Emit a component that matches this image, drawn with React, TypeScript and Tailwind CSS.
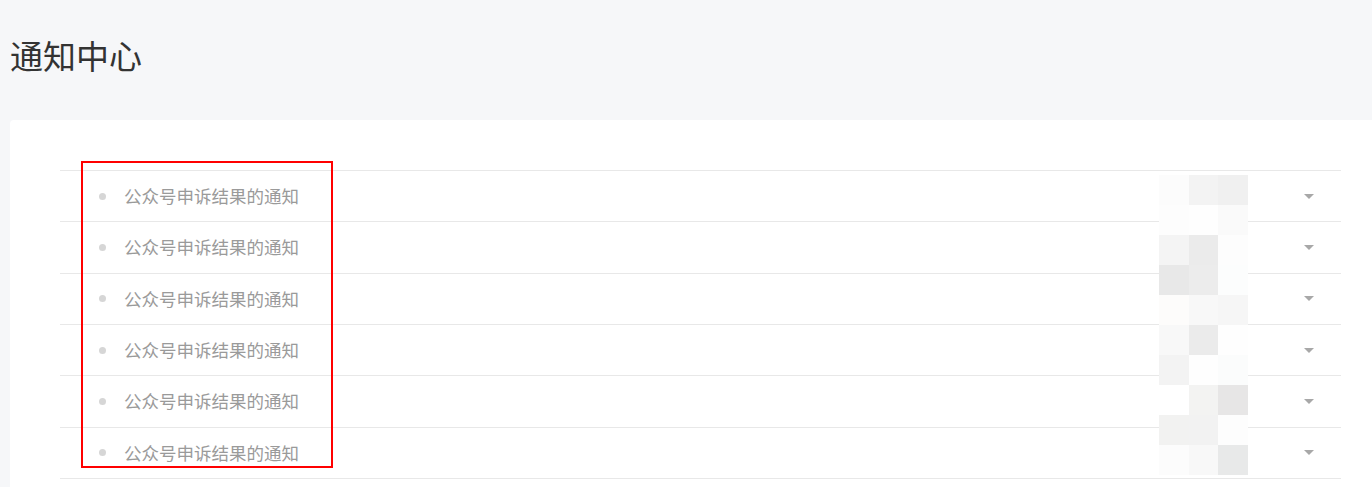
import React from "react";

// mosaic cells, row by row (3 per row)
const MOSAIC: string[] = [
  "#fcfcfc", "#f3f3f3", "#f0f0f0",
  "#fdfdfd", "#fefefe", "#fafafa",
  "#f4f4f4", "#ebebeb", "#fdfdfd",
  "#e8e8e8", "#ececec", "#fcfdfd",
  "#fdfcfb", "#f8f8f8", "#f6f6f6",
  "#f8f8f8", "#ebebeb", "#fefefe",
  "#f3f3f3", "#fefefe", "#fbfcfc",
  "#ffffff", "#f3f3f2", "#e7e6e6",
  "#f2f2f1", "#f2f2f2", "#fdfdfd",
  "#fcfcfc", "#f8f8f8", "#e8e9e9",
];

const ITEMS = Array.from({ length: 6 }, () => "公众号申诉结果的通知");

function NoticeRow({ title }: { title: string }) {
  return (
    <div className="flex h-[51.33px] items-center border-b border-[#e8e8e8]">
      <span className="ml-[39px] h-[7px] w-[7px] rounded-full bg-[#d6d6d6]" />
      <span className="ml-[18px] text-[17.5px] text-[#9a9a9a]">{title}</span>
      <span className="ml-auto mr-[27px] h-0 w-0 border-x-[5px] border-t-[5px] border-x-transparent border-t-[#a8a8a8]" />
    </div>
  );
}

export default function App() {
  return (
    <div
      className="relative h-[487px] w-full overflow-hidden bg-[#f6f7f9]"
      style={{ fontFamily: '"Noto Sans CJK SC", "Noto Sans", sans-serif' }}
    >
      <h1 className="pl-[10px] pt-[32px] text-[33px] leading-[46px] font-normal text-[#333]">
        通知中心
      </h1>

      <div className="ml-[10px] mt-[42px] w-[1381px] rounded-[4px] bg-white px-[50px] pt-[50px] pb-[20px]">
        <div className="relative border-t border-[#e8e8e8]">
          {ITEMS.map((t, i) => (
            <NoticeRow key={i} title={t} />
          ))}

          {/* blurred block */}
          <div className="absolute left-[1099px] top-[4px] grid h-[300px] w-[89px] grid-cols-3 grid-rows-10">
            {MOSAIC.map((c, i) => (
              <div key={i} style={{ backgroundColor: c }} />
            ))}
          </div>
        </div>
      </div>

      {/* annotation box */}
      <div className="absolute left-[81px] top-[161px] h-[307px] w-[252px] border-2 border-[#ff0000]" />
    </div>
  );
}
